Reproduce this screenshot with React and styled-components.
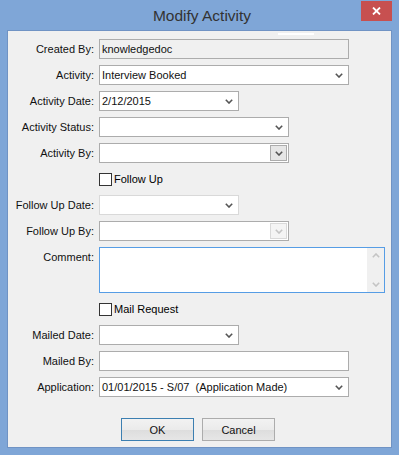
import React from "react";
import styled, { createGlobalStyle } from "styled-components";

const GlobalStyle = createGlobalStyle`
    html, body {
        margin: 0;
        padding: 0;
        background: #7fa6d7;
    }
    * {
        box-sizing: border-box;
    }
`;

const Window = styled.div`
    width: 399px;
    height: 455px;
    background: #7fa6d7;
    display: flex;
    flex-direction: column;
    font-family: "Liberation Sans", Arial, sans-serif;
    font-size: 11px;
    color: #000;
`;

const TitleBar = styled.div`
    height: 31px;
    display: grid;
    grid-template-columns: 1fr auto 1fr;
    padding-right: 7px;
`;

const Title = styled.div`
    grid-column: 2;
    line-height: 31px;
    font-size: 15.5px;
    color: #333;
    padding-left: 12px;
`;

const CloseButton = styled.div`
    grid-column: 3;
    justify-self: end;
    margin-top: 1px;
    width: 31px;
    height: 20px;
    background: #c75050;
    display: flex;
    align-items: center;
    justify-content: center;
`;

const Client = styled.div`
    position: relative;
    margin: 0 8px 0 8px;
    height: 416px;
    background: #f0f0f0;
    box-shadow: 0 0 0 1px #7093c4;
    display: flex;
    flex-direction: column;
`;

// small white sliver at the top edge of the client area
const Glint = styled.div`
    position: absolute;
    top: 2px;
    left: 270px;
    width: 36px;
    height: 2px;
    background: #fff;
`;

const Form = styled.div`
    display: grid;
    grid-template-columns: 86px 1fr;
    column-gap: 5px;
    row-gap: 6px;
    padding-top: 8px;
`;

const Label = styled.div`
    text-align: right;
    line-height: 20px;
    height: 20px;
    white-space: nowrap;
    color: #111;
`;

const Field = styled.div`
    width: ${(p) => p.$width}px;
    height: 20px;
    display: flex;
    align-items: center;
    border: 1px solid ${(p) => p.$border || "#acacac"};
    background: ${(p) => (p.$readOnly ? "#f0f0f0" : "#fff")};
    padding-left: 2px;
    white-space: nowrap;
    overflow: hidden;
`;

const FieldText = styled.span`
    flex: 1;
    color: #111;
`;

const ChevronWrap = styled.span`
    display: flex;
    margin-right: 5px;
`;

const DropButton = styled.span`
    width: 17px;
    height: 16px;
    margin-right: 1px;
    display: flex;
    align-items: center;
    justify-content: center;
    border: 1px solid ${(p) => (p.$disabled ? "#d9d9d9" : "#acacac")};
    background: ${(p) => (p.$disabled ? "#f4f4f4" : "#e6e6e6")};
`;

const CheckRow = styled.label`
    grid-column: 2;
    height: 20px;
    display: flex;
    align-items: center;
    gap: 2px;
`;

const CheckBox = styled.span`
    width: 13px;
    height: 13px;
    border: 1px solid #333;
    background: #fff;
`;

const CommentBox = styled.div`
    width: 286px;
    height: 46px;
    border: 1px solid #569de5;
    background: #fff;
    display: flex;
    justify-content: flex-end;
`;

const ScrollTrack = styled.div`
    width: 17px;
    height: 100%;
    background: #f0f0f0;
    display: flex;
    flex-direction: column;
    align-items: center;
    justify-content: space-between;
    padding: 5px 0 5px;
`;

const ButtonRow = styled.div`
    display: flex;
    justify-content: center;
    gap: 8px;
    margin-top: 21px;
    padding-right: 3px;
`;

const Button = styled.button`
    width: 73px;
    height: 23px;
    padding: 0;
    font-family: "Liberation Sans", Arial, sans-serif;
    font-size: 11px;
    color: #111;
    border: 1px solid ${(p) => (p.$default ? "#3c7fb1" : "#acacac")};
    background: linear-gradient(#f2f2f2 0%, #ebebeb 50%, #dddddd 51%, #e6e6e6 100%);
`;

function Chevron({ color = "#555", up = false }) {
    return (
        <svg width="8" height="5" viewBox="0 0 8 5">
            <polyline
                points={up ? "0.8,4.2 4,1 7.2,4.2" : "0.8,0.8 4,4 7.2,0.8"}
                fill="none"
                stroke={color}
                strokeWidth="1.6"
            />
        </svg>
    );
}

function Dropdown({ width, value, border, boxed, disabled }) {
    return (
        <Field $width={width} $border={border}>
            <FieldText>{value}</FieldText>
            {boxed ? (
                <DropButton $disabled={disabled}>
                    <Chevron color={disabled ? "#c4c4c4" : "#555"} />
                </DropButton>
            ) : (
                <ChevronWrap>
                    <Chevron />
                </ChevronWrap>
            )}
        </Field>
    );
}

function App() {
    return (
        <>
            <GlobalStyle />
            <Window>
                <TitleBar>
                    <Title>Modify Activity</Title>
                    <CloseButton>
                        <svg width="9" height="8" viewBox="0 0 9 8">
                            <path d="M1 0.5 L8 7.5 M8 0.5 L1 7.5" stroke="#fff" strokeWidth="1.8" />
                        </svg>
                    </CloseButton>
                </TitleBar>
                <Client>
                    <Glint />
                    <Form>
                        <Label>Created By:</Label>
                        <Field $width={250} $readOnly>
                            <FieldText>knowledgedoc</FieldText>
                        </Field>

                        <Label>Activity:</Label>
                        <Dropdown width={250} value="Interview Booked" />

                        <Label>Activity Date:</Label>
                        <Dropdown width={140} value="2/12/2015" />

                        <Label>Activity Status:</Label>
                        <Dropdown width={190} value="" />

                        <Label>Activity By:</Label>
                        <Dropdown width={190} value="" boxed />

                        <CheckRow>
                            <CheckBox />
                            <span>Follow Up</span>
                        </CheckRow>

                        <Label>Follow Up Date:</Label>
                        <Dropdown width={140} value="" border="#d9d9d9" />

                        <Label>Follow Up By:</Label>
                        <Dropdown width={190} value="" boxed disabled />

                        <Label>Comment:</Label>
                        <CommentBox>
                            <ScrollTrack>
                                <Chevron up color="#c4c4c4" />
                                <Chevron color="#c4c4c4" />
                            </ScrollTrack>
                        </CommentBox>

                        <CheckRow>
                            <CheckBox />
                            <span>Mail Request</span>
                        </CheckRow>

                        <Label>Mailed Date:</Label>
                        <Dropdown width={140} value="" />

                        <Label>Mailed By:</Label>
                        <Field $width={250}>
                            <FieldText />
                        </Field>

                        <Label>Application:</Label>
                        <Dropdown width={250} value={"01/01/2015 - S/07\u00a0 (Application Made)"} />
                    </Form>
                    <ButtonRow>
                        <Button $default>OK</Button>
                        <Button>Cancel</Button>
                    </ButtonRow>
                </Client>
            </Window>
        </>
    );
}

export default App;
